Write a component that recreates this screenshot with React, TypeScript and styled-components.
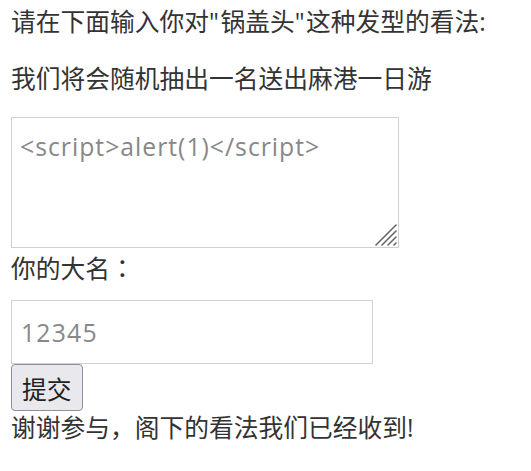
import React from "react";
import styled, { createGlobalStyle } from "styled-components";

const Global = createGlobalStyle`
  html, body { margin: 0; padding: 0; background: #fff; }
  body {
    font-family: "Open Sans", "Noto Sans CJK SC", sans-serif;
    font-size: 24.75px;
    color: #333;
  }
`;

const Page = styled.form`
  display: flex;
  flex-direction: column;
  align-items: flex-start;
  padding: 7px 11px 0;
`;

const Line = styled.p<{ $gap?: number }>`
  margin: ${(p) => p.$gap ?? 0}px 0 0;
  line-height: 30px;
`;

const Quote = styled.span`
  letter-spacing: 1.5px;
`;

const CentredColon = styled.span`
  font-family: "Noto Sans CJK TC", sans-serif;
  line-height: 0;
`;

const CommentBox = styled.div`
  position: relative;
  margin: 23px 0 0;
  display: flex;
`;

const Comment = styled.textarea`
  box-sizing: border-box;
  margin: 0;
  width: 388px;
  height: 131px;
  padding: 12px 8px;
  border: 1px solid #d0d0d0;
  font: inherit;
  letter-spacing: 1px;
  color: #333;
  resize: none;
  &::placeholder { color: #888; }
`;

const Grip = styled.svg`
  position: absolute;
  right: 2px;
  bottom: 2px;
  width: 22px;
  height: 22px;
  pointer-events: none;
`;

const NameInput = styled.input`
  box-sizing: border-box;
  margin: 16px 0 0;
  width: 362px;
  height: 64px;
  padding: 0 9px;
  border: 1px solid #d0d0d0;
  font: inherit;
  letter-spacing: 1.2px;
  color: #333;
  &::placeholder { color: #888; }
`;

const Submit = styled.button`
  box-sizing: border-box;
  margin: 0;
  height: 47px;
  padding: 0 10px;
  border: 1px solid #8f8f9d;
  border-radius: 4px;
  background: #e9e9ed;
  font: inherit;
  color: #222;
`;

export default function App() {
  return (
    <>
      <Global />
      <Page onSubmit={(e) => e.preventDefault()}>
        <Line>
          请在下面输入你对<Quote>"</Quote>锅盖头<Quote>"</Quote>这种发型的看法:
        </Line>
        <Line $gap={27}>我们将会随机抽出一名送出麻港一日游</Line>
        <CommentBox>
          <Comment placeholder="<script>alert(1)</script>" />
          <Grip viewBox="0 0 22 22">
            <g stroke="#666" strokeWidth="1.6" strokeLinecap="round">
              <line x1="1" y1="21" x2="21" y2="1" />
              <line x1="7" y1="21" x2="21" y2="7" />
              <line x1="13" y1="21" x2="21" y2="13" />
              <line x1="19" y1="21" x2="21" y2="19" />
            </g>
          </Grip>
        </CommentBox>
        <Line $gap={6}>
          你的大名<CentredColon>：</CentredColon>
        </Line>
        <NameInput placeholder="12345" />
        <Submit type="submit">提交</Submit>
        <Line $gap={2}>谢谢参与，阁下的看法我们已经收到!</Line>
      </Page>
    </>
  );
}
